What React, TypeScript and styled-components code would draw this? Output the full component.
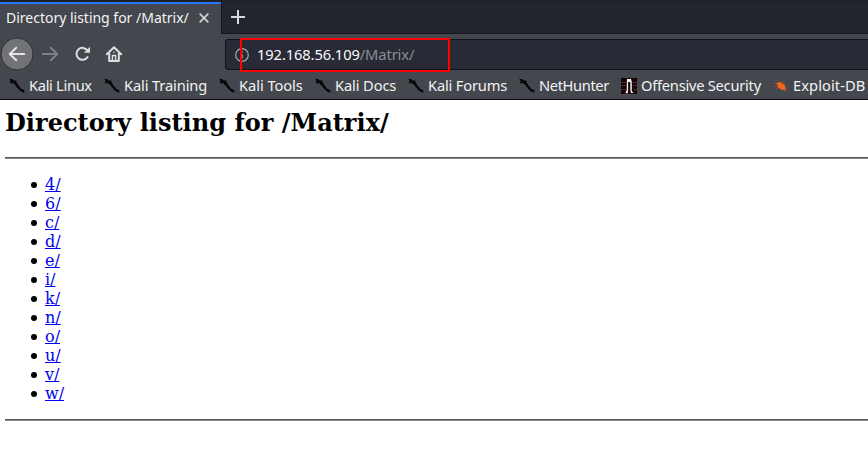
import React from "react";
import styled, { createGlobalStyle } from "styled-components";

const GlobalStyle = createGlobalStyle`
  * { box-sizing: border-box; }
  html, body { margin: 0; background: #fff; overflow: hidden; }
`;

const Browser = styled.div`
  width: 868px;
  height: 459px;
  overflow: hidden;
  display: flex;
  flex-direction: column;
  font-family: "Noto Sans", sans-serif;
  font-size: 14.67px;
  color: #f3f3f3;
`;

const TabStrip = styled.div`
  height: 34px;
  flex: none;
  display: flex;
  background: linear-gradient(#20222b 0 2px, #22252e 2px 33px, #15171d 33px);
`;

const Tab = styled.div`
  width: 222px;
  height: 34px;
  padding: 0 11px 0 6px;
  display: flex;
  align-items: center;
  justify-content: space-between;
  background: linear-gradient(#1c1e26 0 2px, #2979ff 2px 4px, #44474e 4px);
  border-right: 1px solid #14161c;
`;

const TabTitle = styled.span`
  white-space: nowrap;
  font-size: 14px;
  letter-spacing: -0.01px;
  line-height: 20px;
  margin-top: 2px;
`;

const CloseIcon = styled.svg`
  width: 12px;
  height: 12px;
  margin-top: 2px;
`;

const PlusIcon = styled.svg`
  width: 14px;
  height: 14px;
  margin: 10px 0 0 9px;
`;

const Toolbar = styled.div`
  height: 38px;
  flex: none;
  display: flex;
  align-items: flex-start;
  background: #44474e;
`;

const NavButtons = styled.div`
  width: 225px;
  flex: none;
  height: 38px;
  display: flex;
`;

const NavSvg = styled.svg`
  display: block;
  flex: none;
`;

const AddressBar = styled.div`
  position: relative;
  flex: 1;
  height: 31px;
  margin: 5px -4px 0 0;
  padding-left: 9px;
  display: flex;
  align-items: center;
  background: #282a35;
  border: 1px solid #0f1116;
  border-radius: 3px;
`;

const Address = styled.span`
  margin: 0 0 2px 8px;
  white-space: nowrap;
  line-height: 20px;
  letter-spacing: -0.09px;
  color: #8c8d93;
`;

const Host = styled.span`
  color: #fbfbfe;
`;

const Highlight = styled.div`
  position: absolute;
  left: 14px;
  top: -2px;
  width: 210px;
  height: 34px;
  border: 2px solid #f00;
  z-index: 1;
`;

const BookmarkBar = styled.div`
  height: 28px;
  flex: none;
  display: flex;
  align-items: center;
  padding-left: 9px;
  background: #44474e;
  border-bottom: 1px solid #0c0d11;
`;

const Bookmark = styled.div<{ $width: number; $tracking: number }>`
  flex: none;
  width: ${(p) => p.$width}px;
  letter-spacing: ${(p) => p.$tracking}px;
  display: flex;
  align-items: center;
  gap: 4px;
  white-space: nowrap;
  line-height: 20px;
`;

const BookmarkLabel = styled.span`
  margin-bottom: 2px;
`;

const BookmarkIcon = styled.svg`
  width: 16px;
  height: 16px;
  flex: none;
`;

const Page = styled.main`
  flex: 1;
  padding: 9px 0 0 5px;
  background: #fff;
  color: #000;
  font: 16px/19px "DejaVu Serif", serif;
`;

const Heading = styled.h2`
  margin: 0 0 20px;
  font-size: 24px;
  line-height: 28px;
  font-weight: bold;
  letter-spacing: 0.02px;
`;

const Rule = styled.hr`
  height: 2px;
  margin: 0;
  border: 0;
  background: linear-gradient(#555 50%, #888 50%);
`;

const Listing = styled.ul`
  margin: 16px 0;
  padding-left: 26px;
  list-style: none;
`;

const Entry = styled.li`
  height: 19px;
  display: flex;
  align-items: center;
  gap: 8px;

  &::before {
    content: "";
    width: 6px;
    height: 6px;
    margin-top: 1px;
    border-radius: 50%;
    background: #000;
  }
`;

const EntryLink = styled.a`
  color: #0000ee;
  text-decoration: underline;
`;

const KaliIcon = () => (
  <BookmarkIcon viewBox="0 0 16 16">
    <path
      d="M0 .6 2 1.2 3.4.9 4.4 2.2l2.9.6.6 1.2-.7.7 1.5 1.2.8 1.8 1.4 1.2.9 1.8 1.3.6 2.4 1-.4.8.3 1.9-1.7-1-1.9-.5-.8-1.4-1.3-.5-.9-1.8-1.5-.8-.8-1.7L5 6.1 4 5.1 2 5.4.7 4l1.2-.8z"
      fill="#030303"
    />
    <path d="m3 3.4 2 .6M7.4 7.4l1 .7" stroke="#303238" strokeWidth=".5" />
  </BookmarkIcon>
);

const OffensiveIcon = () => (
  <BookmarkIcon viewBox="0 0 16 16">
    <path fill="#180407" d="M0 0h16v16H0z" />
    <path d="M0 4.5h5m6 0h5M0 7.5h5m7 0h4M0 11.5h5m7 0h4" stroke="#4a272b" />
    <path d="M6 1h4l.8 3v9l1.7 2H10l-.8-3V4H7.3v8l-.5 3.2H4.3L5.8 12V4z" fill="#f5efef" />
    <path d="M7.3 4h1.8v11.2H6.8l.5-3.2z" fill="#17090b" />
  </BookmarkIcon>
);

const ExploitIcon = () => (
  <BookmarkIcon viewBox="0 0 16 16">
    <path d="m1 4.5 3 1m1-3 2 2m3-2 1 3M0 8l5 1m-2 2 3-1m7-2 1 1m-1 2 2 1m-4 0 1 2" stroke="#a85225" strokeWidth=".6" />
    <path d="m2 5 2.5.3L6.2 4l2.3.6L10 6l1.5.5 1 2L12 9.7l1.6 2.7-2.3-.6-2.4.2-2.2-1.6L4.5 9l.4-1.4z" fill="#f1651b" />
  </BookmarkIcon>
);

const bookmarks = [
  { label: "Kali Linux", width: 95, tracking: -0.32, Icon: KaliIcon },
  { label: "Kali Training", width: 115, tracking: -0.12, Icon: KaliIcon },
  { label: "Kali Tools", width: 96, tracking: -0.05, Icon: KaliIcon },
  { label: "Kali Docs", width: 93, tracking: -0.12, Icon: KaliIcon },
  { label: "Kali Forums", width: 111, tracking: -0.18, Icon: KaliIcon },
  { label: "NetHunter", width: 102, tracking: -0.38, Icon: KaliIcon },
  { label: "Offensive Security", width: 152, tracking: -0.24, Icon: OffensiveIcon },
  { label: "Exploit-DB", width: 100, tracking: 0.08, Icon: ExploitIcon },
];

const entries = ["4/", "6/", "c/", "d/", "e/", "i/", "k/", "n/", "o/", "u/", "v/", "w/"];

export default function App() {
  return (
    <>
      <GlobalStyle />
      <Browser>
        <TabStrip>
          <Tab>
            <TabTitle>Directory listing for /Matrix/</TabTitle>
            <CloseIcon viewBox="0 0 12 12">
              <path d="m1.7 1.7 8.6 8.6m0-8.6-8.6 8.6" stroke="#d2d2d3" strokeWidth="1.7" />
            </CloseIcon>
          </Tab>
          <PlusIcon viewBox="0 0 14 14">
            <path d="M7 0v14M0 7h14" stroke="#d6d6d8" strokeWidth="2" />
          </PlusIcon>
        </TabStrip>
        <Toolbar>
          <NavButtons>
            <NavSvg width="130" height="38" viewBox="0 34 130 38" fill="none">
              <circle cx="17" cy="54" r="16" fill="#727377" stroke="#2f3136" />
              <path d="M24.3 54H10m6.2-6.3L9.7 54l6.5 6.3" stroke="#e4e4e4" strokeWidth="2" strokeLinecap="round" strokeLinejoin="round" />
              <path d="M42.7 54H57m-6.2-6.3 6.5 6.3-6.5 6.3" stroke="#7e8084" strokeWidth="2" strokeLinecap="round" strokeLinejoin="round" />
              <path d="M87.4 50.4A6 6 0 1 0 87.6 57" stroke="#dededf" strokeWidth="2" strokeLinecap="round" />
              <path d="M90 46.7v6h-6z" fill="#dededf" />
              <path d="m106.8 54.2 7.2-7 7.2 7M109.2 53v8h9.6v-8" stroke="#dededf" strokeWidth="2" strokeLinecap="round" strokeLinejoin="round" />
              <path d="M112.4 61v-5.5h3.2V61" stroke="#dededf" strokeWidth="1.4" />
              <path d="M113.2 52.2h1.6" stroke="#dededf" strokeWidth="1" />
            </NavSvg>
          </NavButtons>
          <AddressBar>
            <NavSvg width="14" height="14" viewBox="0 0 14 14" fill="none">
              <circle cx="7" cy="7" r="6.3" stroke="#a5a6aa" strokeWidth="1.2" />
              <path d="M7 6.2v4.3M7 3.3v1.4" stroke="#a5a6aa" strokeWidth="1.4" />
            </NavSvg>
            <Address>
              <Host>192.168.56.109</Host>/Matrix/
            </Address>
            <Highlight />
          </AddressBar>
        </Toolbar>
        <BookmarkBar>
          {bookmarks.map(({ label, width, tracking, Icon }) => (
            <Bookmark key={label} $width={width} $tracking={tracking}>
              <Icon />
              <BookmarkLabel>{label}</BookmarkLabel>
            </Bookmark>
          ))}
        </BookmarkBar>
        <Page>
          <Heading>Directory listing for /Matrix/</Heading>
          <Rule />
          <Listing>
            {entries.map((name) => (
              <Entry key={name}>
                <EntryLink>{name}</EntryLink>
              </Entry>
            ))}
          </Listing>
          <Rule />
        </Page>
      </Browser>
    </>
  );
}
